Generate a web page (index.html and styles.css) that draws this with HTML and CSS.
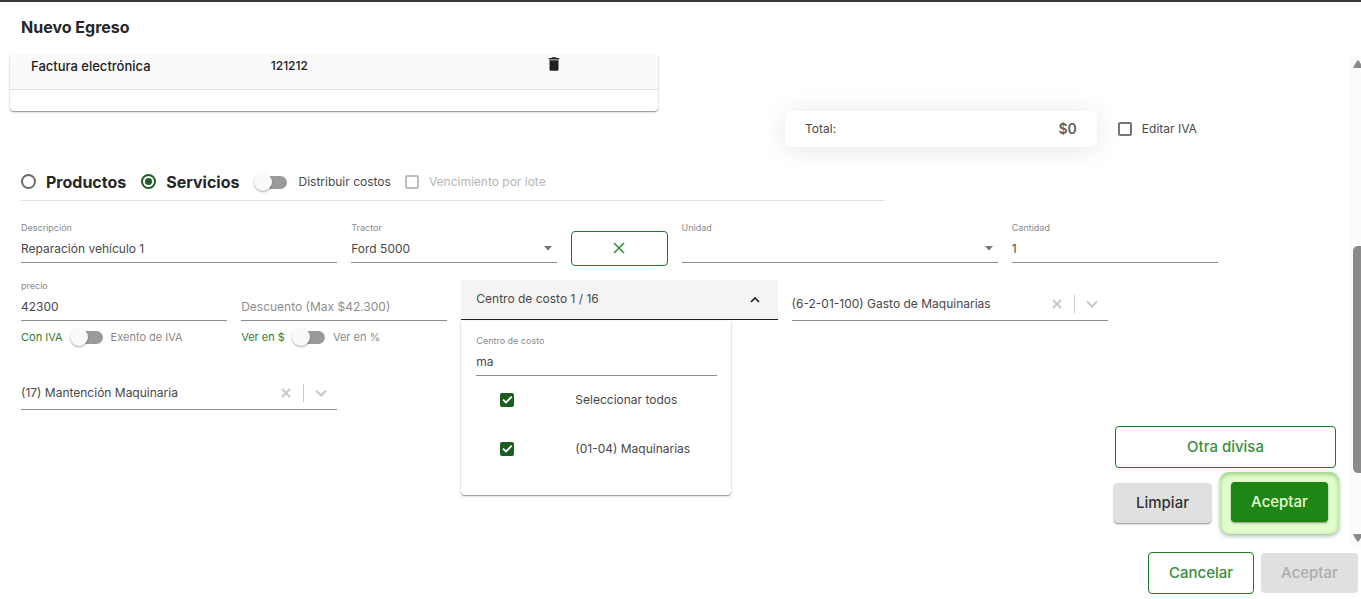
FILE: index.html
```html
<!DOCTYPE html>
<html lang="es">
<head>
<meta charset="utf-8">
<meta name="viewport" content="width=device-width, initial-scale=1">
<title>Nuevo Egreso</title>
<link rel="stylesheet" href="styles.css">
</head>
<body>
<div class="dialog">
  <header class="dialog-header"><h1>Nuevo Egreso</h1></header>
  <div class="dialog-body">
    <main class="content">
      <div class="card">
        <table class="docs">
          <tbody>
            <tr>
              <td class="col-type">Factura electrónica</td>
              <td class="col-number">121212</td>
              <td class="col-action">
                <button type="button" class="icon-button" aria-label="Eliminar">
                  <svg width="18" height="18" viewBox="0 0 24 24"><path fill="#212121" d="M6 19c0 1.100.9 2 2 2h8c1.100 0 2-.9 2-2V7H6v12zM19 4h-3.500l-1-1h-5l-1 1H5v2h14V4z"/></svg>
                </button>
              </td>
            </tr>
          </tbody>
        </table>
      </div>

      <div class="summary">
        <div class="total"><span>Total:</span><strong>$0</strong></div>
        <label class="check-label edit-iva"><input type="checkbox" class="check">Editar IVA</label>
      </div>

      <div class="kind">
        <label class="radio-label"><input type="radio" name="kind" class="radio">Productos</label>
        <label class="radio-label"><input type="radio" name="kind" class="radio" checked>Servicios</label>
        <label class="switch-label"><input type="checkbox" class="switch">Distribuir costos</label>
        <label class="check-label muted"><input type="checkbox" class="check" disabled>Vencimiento por lote</label>
      </div>

      <form class="form">
        <div class="field span-3">
          <label for="desc">Descripción</label>
          <input id="desc" type="text" value="Reparación vehículo 1">
        </div>
        <div class="field span-2">
          <label for="tractor">Tractor</label>
          <div class="select-wrap">
            <select id="tractor"><option>Ford 5000</option></select>
            <svg class="caret" width="10" height="5" viewBox="0 0 10 5"><path fill="#757575" d="M1 0h8L5 4.500z"/></svg>
          </div>
        </div>
        <button type="button" class="outlined clear-tractor" aria-label="Quitar tractor">
          <svg width="12" height="12" viewBox="0 0 12 12"><path d="M1 1l10 10M11 1L1 11" fill="none" stroke="#388e3c" stroke-width="1.600"/></svg>
        </button>
        <div class="field span-3">
          <label for="unit">Unidad</label>
          <div class="select-wrap">
            <select id="unit"><option></option></select>
            <svg class="caret" width="10" height="5" viewBox="0 0 10 5"><path fill="#757575" d="M1 0h8L5 4.500z"/></svg>
          </div>
        </div>
        <div class="field span-2">
          <label for="qty">Cantidad</label>
          <input id="qty" type="text" value="1">
        </div>

        <div class="span-2 row-start">
          <div class="field">
            <label for="price">precio</label>
            <input id="price" type="text" value="42300">
          </div>
          <label class="toggle"><span class="on">Con IVA</span><input type="checkbox" class="switch"><span>Exento de IVA</span></label>
        </div>
        <div class="span-2">
          <div class="field no-label">
            <input type="text" aria-label="Descuento" placeholder="Descuento (Max $42.300)">
          </div>
          <label class="toggle"><span class="on">Ver en $</span><input type="checkbox" class="switch"><span>Ver en %</span></label>
        </div>
        <div class="cost span-3">
          <button type="button" class="cost-header" aria-expanded="true">
            <span>Centro de costo 1 / 16</span>
            <svg width="10" height="7" viewBox="0 0 10 7"><path d="M1 6l4-4 4 4" fill="none" stroke="#212121" stroke-width="1.700"/></svg>
          </button>
          <div class="cost-panel">
            <div class="field">
              <label for="cost">Centro de costo</label>
              <input id="cost" type="text" value="ma">
            </div>
            <label class="option"><input type="checkbox" class="check" checked>Seleccionar todos</label>
            <label class="option"><input type="checkbox" class="check" checked>(01-04) Maquinarias</label>
          </div>
        </div>
        <div class="combo span-3">
          <select aria-label="Cuenta"><option>(6-2-01-100) Gasto de Maquinarias</option></select>
          <button type="button" class="icon-button" aria-label="Limpiar cuenta"><svg width="10" height="10" viewBox="0 0 10 10"><path d="M1 1l8 8M9 1L1 9" stroke="#c8c8c8" stroke-width="2"/></svg></button>
          <span class="bar"></span>
          <svg class="chevron" width="12" height="8" viewBox="0 0 12 8"><path d="M1 1.500l5 5 5-5" fill="none" stroke="#c8c8c8" stroke-width="2"/></svg>
        </div>

        <div class="combo span-3 row-start">
          <select aria-label="Subcuenta"><option>(17) Mantención Maquinaria</option></select>
          <button type="button" class="icon-button" aria-label="Limpiar subcuenta"><svg width="10" height="10" viewBox="0 0 10 10"><path d="M1 1l8 8M9 1L1 9" stroke="#c8c8c8" stroke-width="2"/></svg></button>
          <span class="bar"></span>
          <svg class="chevron" width="12" height="8" viewBox="0 0 12 8"><path d="M1 1.500l5 5 5-5" fill="none" stroke="#c8c8c8" stroke-width="2"/></svg>
        </div>
      </form>

      <div class="actions">
        <button type="button" class="outlined currency">Otra divisa</button>
        <div class="action-row">
          <button type="button" class="filled">Limpiar</button>
          <span class="highlight"><button type="button" class="filled primary">Aceptar</button></span>
        </div>
      </div>
    </main>
    <div class="scrollbar" aria-hidden="true">
      <svg width="10" height="8" viewBox="0 0 10 8"><path fill="#8a8a8a" d="M1 8q-1 0-.5-1.500L4 1q1-1.500 2 0l3.500 5.500Q10 8 9 8z"/></svg>
      <div class="rail"><div class="thumb"></div></div>
      <svg width="10" height="8" viewBox="0 0 10 8"><path fill="#8a8a8a" d="M1 0q-1 0-.5 1.500L4 7q1 1.500 2 0l3.500-5.500Q10 0 9 0z"/></svg>
    </div>
  </div>
  <footer class="dialog-footer">
    <button type="button" class="outlined cancel">Cancelar</button>
    <button type="button" class="filled" disabled>Aceptar</button>
  </footer>
</div>
</body>
</html>
```
FILE: styles.css
```css
* { box-sizing: border-box; }

body {
  margin: 0;
  background: #fff;
  color: #484848;
  font: 12px/16px Inter, "Open Sans", sans-serif;
}

button, input, select { font: inherit; color: inherit; margin: 0; }
button { cursor: pointer; }
svg { display: block; flex: none; }

.dialog {
  display: flex;
  flex-direction: column;
  min-height: 100vh;
  border-top: 2px solid #3a3838;
}

.dialog-header { padding: 15px 21px 18px; }
h1 { margin: 0; font-size: 16px; line-height: 20px; font-weight: 700; color: #262626; }

.dialog-body { display: flex; flex: 1; }
.content { flex: 1; min-width: 0; }

.card {
  width: 48%;
  margin-left: 10px;
  padding-bottom: 21px;
  border-radius: 0 0 4px 4px;
  box-shadow: 0 1px 1px rgba(0, 0, 0, .35), 0 1px 3px rgba(0, 0, 0, .15);
}
.docs { width: 100%; border-collapse: collapse; table-layout: fixed; }
.docs td {
  height: 34px;
  padding: 0 0 12px 21px;
  background: #fafafa;
  border-bottom: 1px solid #e0e0e0;
  color: #212121;
  font-weight: 500;
}
.docs .col-type { width: 37%; font-size: 13px; }
.docs .col-number { width: 43%; }
.docs .col-action { padding-left: 17px; }
.docs .icon-button { margin-top: -4px; }

.icon-button { display: flex; padding: 0; border: 0; background: none; }

.summary { display: flex; align-items: center; padding-left: 58%; }
.total {
  display: flex;
  flex: 0 0 55%;
  justify-content: space-between;
  align-items: center;
  height: 36px;
  margin-left: 2px;
  padding: 0 20px;
  border-radius: 6px;
  box-shadow: 0 2px 26px rgba(0, 0, 0, .1);
}
.total strong { font-size: 14px; font-weight: 600; color: #616161; }
.edit-iva { margin-left: 21px; }

.check-label, .switch-label, .radio-label { display: flex; align-items: center; gap: 10px; }
.muted { color: #b5b5b5; }

.kind {
  display: flex;
  align-items: center;
  width: 64%;
  height: 37px;
  margin: 17px 0 20px 21px;
  border-bottom: 1px solid #e0e0e0;
}
.kind .radio-label { font-size: 16px; font-weight: 700; color: #262626; margin-right: 15px; }
.kind .switch-label { margin-right: 14px; }

.check {
  appearance: none;
  display: grid;
  place-items: center;
  flex: none;
  width: 14px;
  height: 14px;
  border: 2px solid #757575;
  border-radius: 2px;
}
.check:disabled { border-color: #bdbdbd; }
.check:checked { background: #1b5e20; border-color: #1b5e20; }
.check:checked::after {
  content: "";
  width: 14px;
  height: 14px;
  margin: -2px;
  background: #fff;
  clip-path: polygon(15% 52%, 24% 43%, 40% 59%, 77% 22%, 86% 31%, 40% 77%);
}

.radio {
  appearance: none;
  display: grid;
  place-items: center;
  width: 15px;
  height: 15px;
  border: 2px solid #6b6b6b;
  border-radius: 50%;
}
.radio:checked { border-color: #1b5e20; }
.radio:checked::after { content: ""; width: 7px; height: 7px; border-radius: 50%; background: #1b5e20; }

.switch { appearance: none; position: relative; flex: none; width: 34px; height: 18px; }
.switch::before {
  content: "";
  position: absolute;
  inset: 3px 1px 2px 7px;
  border-radius: 7px;
  background: #9a9a9a;
}
.switch::after {
  content: "";
  position: absolute;
  inset: 0 auto auto 0;
  width: 18px;
  height: 18px;
  border-radius: 50%;
  background: #fafafa;
  box-shadow: 0 1px 2px rgba(0, 0, 0, .35);
}

.form {
  display: grid;
  grid-template-columns: repeat(12, 1fr);
  gap: 16px 14px;
  align-items: start;
  padding: 0 22px 0 21px;
}
.span-2 { grid-column: span 2; }
.span-3 { grid-column: span 3; }
.row-start.span-2 { grid-column: 1 / span 2; }
.row-start.span-3 { grid-column: 1 / span 3; }

.field label { display: block; height: 14px; font-size: 9px; line-height: 14px; color: #8a8a8a; }
.field input, .field select {
  appearance: none;
  display: block;
  width: 100%;
  height: 28px;
  padding: 0;
  border: 0;
  border-bottom: 1px solid #8c8c8c;
  border-radius: 0;
  outline: 0;
  background: transparent;
}
.field select { padding-top: 1px; }
.field input::placeholder { color: #8e8e8e; opacity: 1; }
.no-label { padding-top: 14px; }

.select-wrap { display: grid; align-items: center; }
.select-wrap > * { grid-area: 1 / 1; }
.caret { justify-self: end; margin-right: 4px; pointer-events: none; }

.toggle { display: flex; align-items: center; height: 29px; margin-top: 2px; gap: 7px; font-size: 11px; color: #8a8a8a; }
.toggle .on { color: #2e7d32; }

.outlined {
  border: 1px solid #1b7a26;
  border-radius: 4px;
  background: #fff;
  color: #388e3c;
}
.clear-tractor { display: grid; place-items: center; height: 35px; margin: 10px 0 -3px; padding: 0; }

.cost { position: relative; }
.cost-header {
  display: flex;
  align-items: center;
  justify-content: space-between;
  width: 100%;
  height: 40px;
  margin-top: 1px;
  padding: 0 18px 0 15px;
  border: 0;
  border-bottom: 1px solid #212121;
  background: #f4f4f4;
}
.cost-panel {
  position: absolute;
  z-index: 2;
  top: 42px;
  left: 0;
  width: 270px;
  padding: 13px 14px 21px 15px;
  border-radius: 0 0 4px 4px;
  background: #fff;
  box-shadow: 0 1px 1px rgba(0, 0, 0, .3), 0 1px 3px rgba(0, 0, 0, .2);
}
.option { display: flex; align-items: center; gap: 61px; height: 49px; padding-left: 24px; }

.combo { display: flex; align-items: center; height: 42px; padding-top: 9px; border-bottom: 1px solid #8c8c8c; }
.combo select { appearance: none; flex: 1; min-width: 0; padding: 0; border: 0; background: none; }
.bar { width: 1px; height: 18px; margin: 0 11px 0 12px; background: #ccc; }
.chevron { margin-right: 10px; }

.actions { display: flex; flex-direction: column; width: 225px; margin: 16px 11px 0 auto; gap: 4px; }
.currency { height: 42px; margin: 0 3px 0 1px; }
.action-row { display: flex; align-items: center; justify-content: space-between; }
.currency, .cancel, .filled { font-size: 15px; font-weight: 500; }
.filled {
  width: 97px;
  height: 40px;
  padding: 0;
  border: 0;
  border-radius: 4px;
  background: #e0e0e0;
  color: #333;
  box-shadow: 0 1px 2px rgba(0, 0, 0, .45);
}
.filled.primary { background: #1f8514; color: #e4fdcf; }
.filled:disabled { color: #acacac; box-shadow: none; }
.highlight {
  display: flex;
  padding: 10px 11px 12px;
  border-radius: 9px;
  background: #e4fdcf;
  box-shadow: inset 0 2px 5px rgba(70, 150, 50, .5), 0 2px 4px rgba(60, 130, 90, .5);
}

.scrollbar {
  display: flex;
  flex-direction: column;
  width: 11px;
  padding: 5px 0 4px 3px;
  overflow: hidden;
  background: #fcfcfc;
}
.rail { display: flex; flex: 1; flex-direction: column; justify-content: flex-end; padding-bottom: 61px; }
.thumb { height: 56%; border-radius: 5px 0 0 5px; background: #8a8a8a; }

.dialog-footer { display: flex; justify-content: flex-end; align-items: center; gap: 7px; padding: 6px 3px 5px; }
.cancel { width: 106px; height: 42px; }
```
